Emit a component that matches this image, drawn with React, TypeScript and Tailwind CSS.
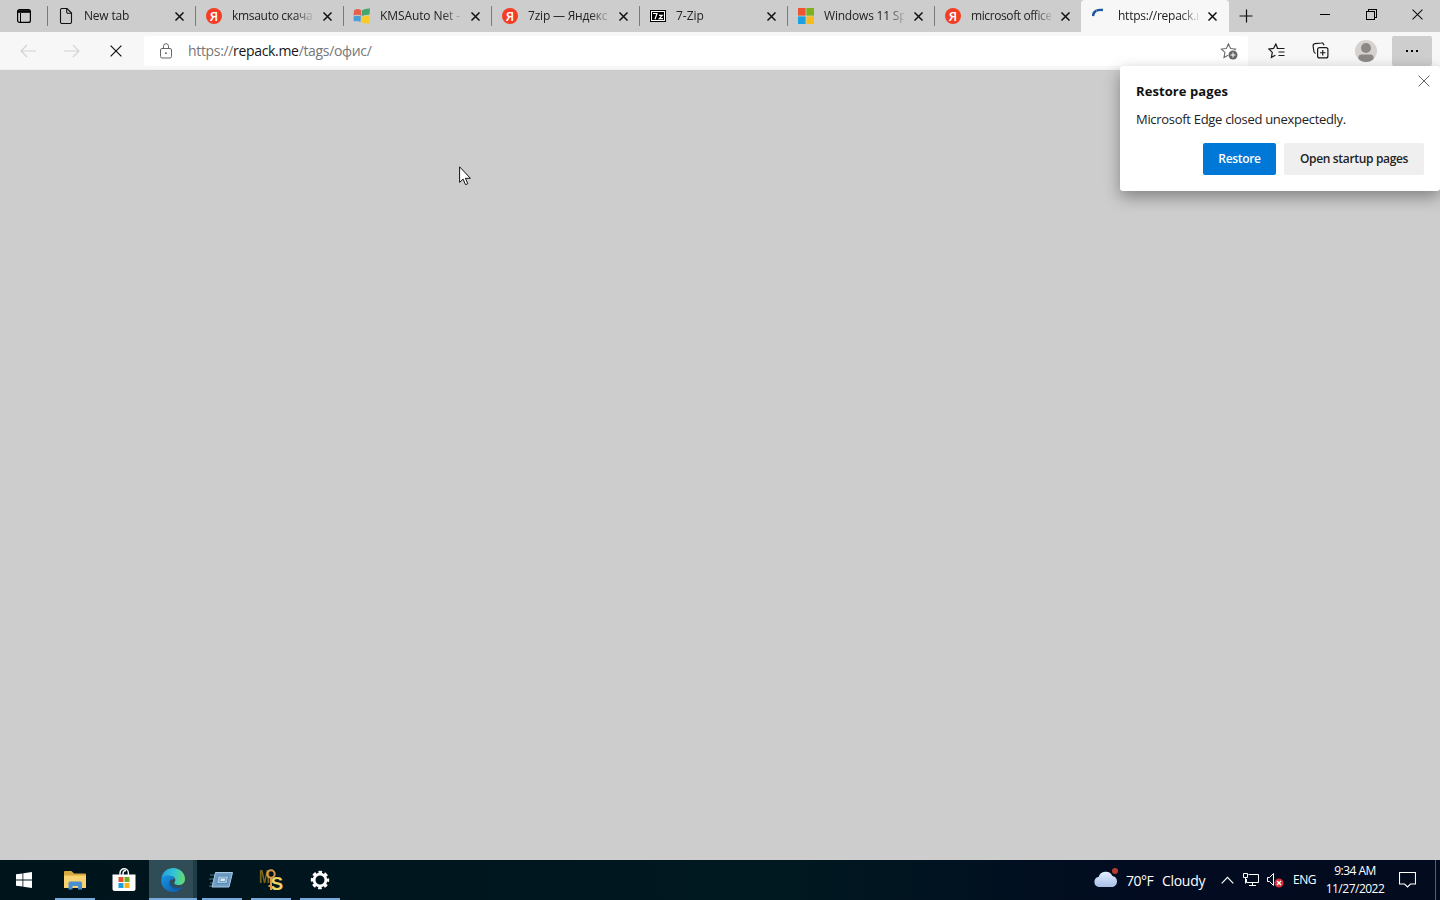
import type { ReactNode } from "react";

interface TabProps {
  title: string;
  icon: ReactNode;
  active?: boolean;
  tracking?: string;
  width?: string;
}

const Cross = ({ size, stroke = "#111", width = 1.3 }: { size: number; stroke?: string; width?: number }) => (
  <svg width={size} height={size} viewBox="0 0 10 10" className="shrink-0">
    <path d="M.5 .5l9 9M9.5 .5l-9 9" stroke={stroke} strokeWidth={(width * 10) / size} fill="none" />
  </svg>
);

const PageIcon = () => (
  <svg width="16" height="16" viewBox="0 0 16 16" fill="none" stroke="#111" strokeWidth="1.1">
    <path d="M2.5 2A1.5 1.5 0 0 1 4 .5h5L13.500 5v9a1.500 1.500 0 0 1-1.500 1.500H4A1.500 1.500 0 0 1 2.500 14z" />
    <path d="M8.700.700v3.300A1.200 1.200 0 0 0 9.900 5.200h3.400" />
  </svg>
);

const YandexIcon = () => (
  <span className="flex size-4 items-center justify-center rounded-full bg-[#f33d25] text-[13px] font-semibold leading-none text-white">
    Я
  </span>
);

const FlagIcon = () => (
  <svg width="18" height="16" viewBox="0 0 18 16" className="shrink-0">
    <path d="M1 2.500Q4-.2 8 2v5.400Q4 6 .6 7.600z" fill="#e8604c" />
    <path d="M8.800 2.200Q13 .2 17 .5l-.5 6Q12 6.500 8.700 8z" fill="#45a56f" />
    <path d="M.5 8.400Q4 7 7.900 8.300L7.500 14Q4 12.500.8 13.500z" fill="#4a9ed8" />
    <path d="M8.700 8.800Q12.500 7.400 16.500 7.400V15Q12.500 16.500 8.300 14.300z" fill="#f8c927" />
  </svg>
);

const SevenZipIcon = () => (
  <svg width="16" height="12" viewBox="0 0 16 12">
    <path d="M0 0h16v12H0z" fill="#000" />
    <path d="M1 1h14v10H1z" fill="#fff" />
    <path d="M2 2h12v8H2z" fill="#000" />
    <path d="M3 3.500h4L5 9.300M9 5.300h3.300L9.300 8.600h3.700" stroke="#fff" strokeWidth="1.200" fill="none" />
  </svg>
);

const MicrosoftIcon = () => (
  <svg width="16" height="16" viewBox="0 0 16 16">
    <path d="M0 0h7.600v7.600H0z" fill="#ec5530" />
    <path d="M8.400 0H16v7.600H8.400z" fill="#7db21c" />
    <path d="M0 8.400h7.600V16H0z" fill="#1ba1e2" />
    <path d="M8.400 8.400H16V16H8.400z" fill="#f8bb1c" />
  </svg>
);

const Spinner = () => (
  <svg width="16" height="16" viewBox="0 0 16 16">
    <path d="M1 8Q1.800.8 11 2" stroke="#1c56a0" strokeWidth="2.400" fill="none" strokeDasharray="6.500 .3" />
  </svg>
);

const Tab = ({ title, icon, active, tracking, width }: TabProps) => (
  <div
    className={`relative flex h-8 shrink-0 items-center pl-[11px] ${width ?? "w-[148px]"} ${
      active ? "rounded-t-[4px] bg-[#f7f7f7]" : ""
    }`}
  >
    {!active && <span className="absolute left-0 top-1.5 h-5 w-px bg-[#7a7a7a]" />}
    <span className="flex w-4 shrink-0 items-center justify-center">{icon}</span>
    <span
      className={`ml-2.5 w-20 shrink-0 whitespace-nowrap text-[12px] text-[#222] [mask-image:linear-gradient(90deg,#000_78%,transparent_104%)] ${
        tracking ?? "tracking-[-0.15px]"
      }`}
    >
      {title}
    </span>
    <span className={`flex ${width || active ? "ml-2.5" : "ml-[11px]"}`}>
      <Cross size={9} width={1.5} />
    </span>
  </div>
);

const tabs: TabProps[] = [
  { title: "New tab", icon: <PageIcon />, tracking: "tracking-[-0.2px]" },
  { title: "kmsauto скача", icon: <YandexIcon />, tracking: "tracking-[-0.3px]" },
  { title: "KMSAuto Net –", icon: <FlagIcon />, tracking: "tracking-[-0.1px]" },
  { title: "7zip — Яндекс", icon: <YandexIcon />, tracking: "tracking-[-0.2px]" },
  { title: "7-Zip", icon: <SevenZipIcon />, tracking: "tracking-[0px]" },
  { title: "Windows 11 Sp", icon: <MicrosoftIcon />, width: "w-[147px]", tracking: "tracking-[-0.2px]" },
  { title: "microsoft office", icon: <YandexIcon />, width: "w-[147px]", tracking: "tracking-[-0.4px]" },
  { title: "https://repack.r", icon: <Spinner />, active: true, tracking: "tracking-[-0.25px]" },
];

const TabStrip = () => (
  <div className="flex h-8 bg-[#cdcdcd]">
    <div className="flex w-[47px] shrink-0 items-center justify-center">
      <svg width="14" height="14" viewBox="0 0 14 14" fill="none" stroke="#000" strokeWidth="1.200">
        <rect x=".6" y=".6" width="12.800" height="12.800" rx="2" />
        <path d="M1 2.500h12" strokeWidth="2.600" />
        <path d="M3.500 4v9" strokeWidth="1" />
      </svg>
    </div>
    {tabs.map((tab, i) => (
      <Tab key={i} {...tab} />
    ))}
    <div className="ml-[10px] flex items-center">
      <svg width="14" height="14" viewBox="0 0 14 14" stroke="#111" strokeWidth="1.200">
        <path d="M7.500 .5v13M.5 7h13" />
      </svg>
    </div>
    <div className="ml-auto flex h-[29px] items-center">
      <span className="flex w-[46px] justify-center">
        <span className="h-px w-2.5 bg-black" />
      </span>
      <span className="flex w-[46px] justify-center">
        <svg width="11" height="11" viewBox="0 0 11 11" fill="none" stroke="#000" shapeRendering="crispEdges">
          <path d="M.5 2.500h8v8h-8zM2.500 2.500v-2h8v8h-2" />
        </svg>
      </span>
      <span className="flex w-[46px] justify-center">
        <Cross size={11} width={1.1} />
      </span>
    </div>
  </div>
);

const star = "M7.500 1l2 4.300 4.700.600-3.400 3.200.9 4.700-4.200-2.300-4.200 2.300.9-4.700L.8 5.900l4.700-.600z";

const Toolbar = () => (
  <div className="flex h-[38px] items-center border-b border-[#f0f0f0] bg-[#f7f7f7]">
    <div className="flex shrink-0 items-center pl-5">
      <svg width="16" height="14" viewBox="0 0 16 14" fill="none" stroke="#d2d2d2" strokeWidth="1.100">
        <path d="M16 7H1M7 1L1 7l6 6" />
      </svg>
      <svg className="ml-7" width="16" height="14" viewBox="0 0 16 14" fill="none" stroke="#d2d2d2" strokeWidth="1.100">
        <path d="M0 7h15M9 1l6 6-6 6" />
      </svg>
      <span className="ml-[30px] flex">
        <Cross size={12} width={1.2} />
      </span>
    </div>
    <div className="ml-[22px] flex h-[30px] w-[1104px] shrink-0 items-center rounded-[3px] bg-white pl-4">
      <svg width="12" height="16" viewBox="0 0 12 16" fill="none" stroke="#666" strokeWidth="1">
        <rect x=".5" y="5.500" width="11" height="9.500" rx="1.500" />
        <path d="M3.500 5.500V3.200a2.500 2.500 0 0 1 5 0v2.300" />
        <circle cx="6" cy="10.200" r=".9" fill="#555" stroke="none" />
      </svg>
      <span className="ml-4 text-[14px] tracking-[-0.33px] text-[#777]">
        https://<span className="text-[#161616]">repack.me</span>/tags/офис/
      </span>
      <svg className="ml-auto mr-2.5" width="18" height="18" viewBox="0 0 18 18">
        <path d={star} fill="none" stroke="#666" strokeWidth="1" transform="translate(.5 .8) scale(1.06)" />
        <circle cx="13" cy="13" r="5" fill="#fff" />
        <circle cx="13" cy="13" r="4.500" fill="#666" />
        <path d="M13 10.500v5M10.500 13h5" stroke="#fff" />
      </svg>
    </div>
    <div className="flex shrink-0 items-center pl-5">
      <svg width="17" height="16" viewBox="0 0 17 16" fill="none" stroke="#1b1b1b" strokeWidth="1.200">
        <path d="M9.700 5.500L7.800 1 5.600 5.400.9 6l3.400 3.400-.9 5L7.400 12.300M8.700 5.500h7.800M10.500 9h6M10.500 12.500h6" />
      </svg>
      <svg className="ml-[27px]" width="17" height="17" viewBox="0 0 17 17" fill="none" stroke="#1b1b1b" strokeWidth="1.200">
        <rect x="5.600" y="5.600" width="10.300" height="10.300" rx="2" />
        <path d="M10.750 8v5.500M8 10.750h5.500M12 3.300l-.4-1Q11 .800 9.500 1L3 1.600Q.9 2 1.100 4l.8 5.500Q2.200 11 3.700 11.300" />
      </svg>
      <svg className="ml-[26px]" width="22" height="22" viewBox="0 0 22 22">
        <circle cx="11" cy="11" r="11" fill="#d5d2d0" />
        <circle cx="11" cy="8" r="5" fill="#8b8886" />
        <path d="M3.300 18.800Q3 14.500 7 14.500h8q4 0 3.700 4.300Q15.500 22 11 22t-7.700-3.200z" fill="#8b8886" />
      </svg>
      <div className="ml-[15px] flex h-[30px] w-10 items-center justify-center gap-[3px] rounded-[2px] bg-[#cecece]">
        <span className="size-[2px] bg-black" />
        <span className="size-[2px] bg-black" />
        <span className="size-[2px] bg-black" />
      </div>
    </div>
  </div>
);

const RestorePopup = () => (
  <div className="absolute right-0 top-[66px] h-[125px] w-80 rounded-[3px] bg-white px-4 pt-4 shadow-[0_6px_16px_rgba(0,0,0,0.36)]">
    <span className="absolute right-2.5 top-[9px] flex">
      <Cross size={12} stroke="#666" width={1} />
    </span>
    <h2 className="text-[13px] font-bold leading-[19px] tracking-[0.08px] text-[#111]">Restore pages</h2>
    <p className="mt-[9px] text-[13px] leading-[19px] tracking-[-0.3px] text-[#222]">Microsoft Edge closed unexpectedly.</p>
    <div className="mt-3.5 flex justify-end gap-2 text-[12px] font-semibold">
      <button className="h-8 w-[73px] rounded-[2px] bg-[#0078d7] tracking-[-0.33px] text-white">Restore</button>
      <button className="h-8 w-[140px] rounded-[2px] bg-[#efefef] tracking-[-0.33px] text-[#222]">Open startup pages</button>
    </div>
  </div>
);

const StartIcon = () => (
  <svg width="16" height="16" viewBox="0 0 16 16" fill="#fff">
    <path d="M0 2.300L6.500 1.400v6.200H0zM7.300 1.300L16 0v7.600H7.300zM0 8.400h6.500v6.200L0 13.700zM7.300 8.400H16V16l-8.700-1.200z" />
  </svg>
);

const ExplorerIcon = () => (
  <svg width="22" height="19" viewBox="0 0 22 19">
    <path d="M0 1q0-1 1-1h6.500L10 2.500h11q1 0 1 1V17H0z" fill="#d9a83f" />
    <path d="M0 4.500h22V17H0z" fill="#f8d36f" />
    <path d="M4.500 18.500V12q0-1.500 1.500-1.500h10.500q1.500 0 1.500 1.500v6.500h-4V15h-5.500v3.500z" fill="#4a8fd2" />
  </svg>
);

const StoreIcon = () => (
  <svg width="24" height="24" viewBox="0 0 24 24">
    <path d="M8 7V5a4.200 4.200 0 0 1 8.400 0v2M11 7V5.500a3 3 0 0 1 3-3" fill="none" stroke="#fff" strokeWidth="1.400" />
    <path d="M.5 6.500h23V21q0 2-2 2h-19q-2 0-2-2z" fill="#fff" />
    <path d="M6.500 9h5v5h-5z" fill="#e74f2d" />
    <path d="M12.500 9h5v5h-5z" fill="#72ac1a" />
    <path d="M6.500 15h5v5h-5z" fill="#1aa0df" />
    <path d="M12.500 15h5v5h-5z" fill="#f8b51b" />
  </svg>
);

const EdgeIcon = () => (
  <svg width="24" height="24" viewBox="0 0 24 24">
    <defs>
      <linearGradient id="edgeTop" x1="0" y1=".4" x2="1" y2=".5">
        <stop offset="0" stopColor="#249fe3" />
        <stop offset=".55" stopColor="#35c5d2" />
        <stop offset="1" stopColor="#65dc69" />
      </linearGradient>
      <linearGradient id="edgeBottom" x1="0" y1="0" x2="1" y2="1">
        <stop offset="0" stopColor="#1896e5" />
        <stop offset="1" stopColor="#0d58a8" />
      </linearGradient>
    </defs>
    <path d="M.3 10.500C1.500 4 6.300 0 12.300 0 19 0 24 5 24 11c0 4-3 6-6.500 6-3 0-5-1.300-3.800-3 2-3-.8-6-5-6C4.500 8 1.500 9 .3 10.500z" fill="url(#edgeTop)" />
    <path d="M.2 12C.5 8.500 4 7 8 7.500c3 .3 5 2 5.200 4-4-1-5 1.500-4 4.500 1.500 4.500 7.500 5.500 12.300 3C19 22 16 24 12 24 5 24-.3 18.500.2 12z" fill="url(#edgeBottom)" />
    <path d="M9 12c-2.300 4.500.5 9 6.500 9.500 2.500.2 5-1 6.300-2.800-4 2-9 1.500-11.300-1.500-1.200-1.500-1.500-3.300-1.500-5.200z" fill="#125aa3" />
  </svg>
);

const RunIcon = () => (
  <svg width="24" height="18" viewBox="0 0 24 18">
    <path d="M1 4h5M0 8h5M1 12h4M0 15h4" stroke="#477290" />
    <path d="M6.500 1.500h17L20 16H3z" fill="#6f9cc5" stroke="#a7c9e3" />
    <path d="M9 5h10.500L18 12.500H7.700z" fill="#a6c8e3" stroke="#5788b5" />
    <path d="M11.500 7h5.300l-.8 3.500h-5.300z" fill="#d6e8f5" stroke="#6f9cc5" />
  </svg>
);

const KeyIcon = () => (
  <div className="relative flex h-6 w-6 font-['Liberation_Sans'] leading-none">
    <span className="w-3 origin-left scale-x-[.74] text-[18px] font-bold text-[#7c6519]">M</span>
    <svg className="absolute left-[7px] top-px" width="10" height="22" viewBox="0 0 10 22" fill="none" stroke="#dd9a48" strokeWidth="2">
      <circle cx="5" cy="5" r="3.700" />
      <path d="M5 9v12M5 17H2.500" />
    </svg>
    <span className="mt-[6px] w-3 text-[19px] font-bold text-[#ecd561]">S</span>
  </div>
);

const GearIcon = () => (
  <svg width="20" height="20" viewBox="0 0 20 20" fill="none" stroke="#fff">
    <circle cx="10" cy="10" r="5.900" strokeWidth="2.800" />
    <circle cx="10" cy="10" r="7.700" strokeWidth="3" strokeDasharray="3.500 2.548" strokeDashoffset="1.750" />
  </svg>
);

const apps = [
  { icon: <StartIcon />, cell: "w-[49px] pr-px", line: "" },
  { icon: <ExplorerIcon />, cell: "w-[51px] pl-px", line: "left-[6px] w-10" },
  { icon: <StoreIcon />, cell: "w-[49px] pr-px", line: "" },
  { icon: <EdgeIcon />, cell: "w-12 pl-1 bg-[#304d57] border-r-4 border-[#203c45]", line: "left-0 w-12" },
  { icon: <RunIcon />, cell: "w-[49px] pr-px", line: "left-[5px] w-10" },
  { icon: <KeyIcon />, cell: "w-[49px]", line: "left-[5px] w-10" },
  { icon: <GearIcon />, cell: "w-[49px]", line: "left-[5px] w-10" },
];

const Taskbar = () => (
  <div className="flex h-10 bg-[linear-gradient(90deg,#00141c_0%,#001820_55%,#020b20_80%,#030b1e_100%)] text-white">
    {apps.map((app, i) => (
      <div key={i} className={`relative flex h-10 shrink-0 items-center justify-center ${app.cell}`}>
        {app.icon}
        {app.line && <span className={`absolute bottom-0 h-0.5 bg-[#76a9dc] ${app.line}`} />}
      </div>
    ))}
    <div className="ml-auto flex items-center">
      <svg className="-mt-1" width="26" height="20" viewBox="0 0 26 20">
        <defs>
          <linearGradient id="cloud" x1="0" y1="0" x2="0" y2="1">
            <stop offset="0" stopColor="#e4efff" />
            <stop offset="1" stopColor="#a7bee7" />
          </linearGradient>
        </defs>
        <path d="M5 19a5 5 0 0 1-.5-9.900A7.500 7.500 0 0 1 18.500 8a5.700 5.700 0 0 1 .5 11z" fill="url(#cloud)" />
        <circle cx="21" cy="3" r="3" fill="#b93a30" />
      </svg>
      <span className="ml-1.5 w-9 whitespace-nowrap text-[14px] tracking-[-0.5px]">70°F</span>
      <span className="w-[59px] whitespace-nowrap text-[14px] tracking-[-0.3px]">Cloudy</span>
      <svg width="13" height="8" viewBox="0 0 13 8" fill="none" stroke="#fff" strokeWidth="1.200">
        <path d="M.7 7.300l5.800-6 5.800 6" />
      </svg>
      <svg className="ml-[9px]" width="17" height="14" viewBox="0 0 17 14" fill="none" stroke="#fff">
        <path d="M5.500 1.500h10v8h-12V6M9.500 9.500v3M6 12.500h7M.5.500h4v4h-4zM2.500 4.500v6" />
      </svg>
      <svg className="ml-[7px]" width="17" height="16" viewBox="0 0 17 16">
        <path d="M.5 5.500h2l4-4v12l-4-4h-2z" fill="none" stroke="#fff" />
        <circle cx="12" cy="11" r="4.500" fill="#d92c36" />
        <path d="M10 9l4 4M14 9l-4 4" stroke="#fff" strokeWidth="1.300" />
      </svg>
      <span className="ml-[9px] w-6 whitespace-nowrap text-[12px] tracking-[-0.5px]">ENG</span>
      <div className="ml-[8px] w-[60px] text-center text-[12px] leading-[18px] tracking-[-0.5px]">
        <div>9:34 AM</div>
        <div className="whitespace-nowrap">11/27/2022</div>
      </div>
      <svg className="ml-[14px] mr-[19px]" width="17" height="16" viewBox="0 0 17 16" fill="none" stroke="#fff" strokeWidth="1.100">
        <path d="M.5.500h16v11.500h-5l-3 3-3-3h-5z" />
      </svg>
      <span className="mr-1 h-10 w-px bg-[#53606d]" />
    </div>
  </div>
);

export default function App() {
  return (
    <div className="relative flex h-[900px] w-[1440px] flex-col overflow-hidden bg-[#cdcdcd] font-['Open_Sans','Noto_Sans',sans-serif]">
      <TabStrip />
      <Toolbar />
      <div className="flex-1" />
      <Taskbar />
      <RestorePopup />
      <svg className="absolute left-[459px] top-[166px]" width="13" height="20" viewBox="0 0 13 20">
        <path d="M.6.800v15.600l3.500-3.300 2.400 5.600 2.300-1-2.400-5.400h5z" fill="#fff" stroke="#111" strokeWidth="1" />
      </svg>
    </div>
  );
}
